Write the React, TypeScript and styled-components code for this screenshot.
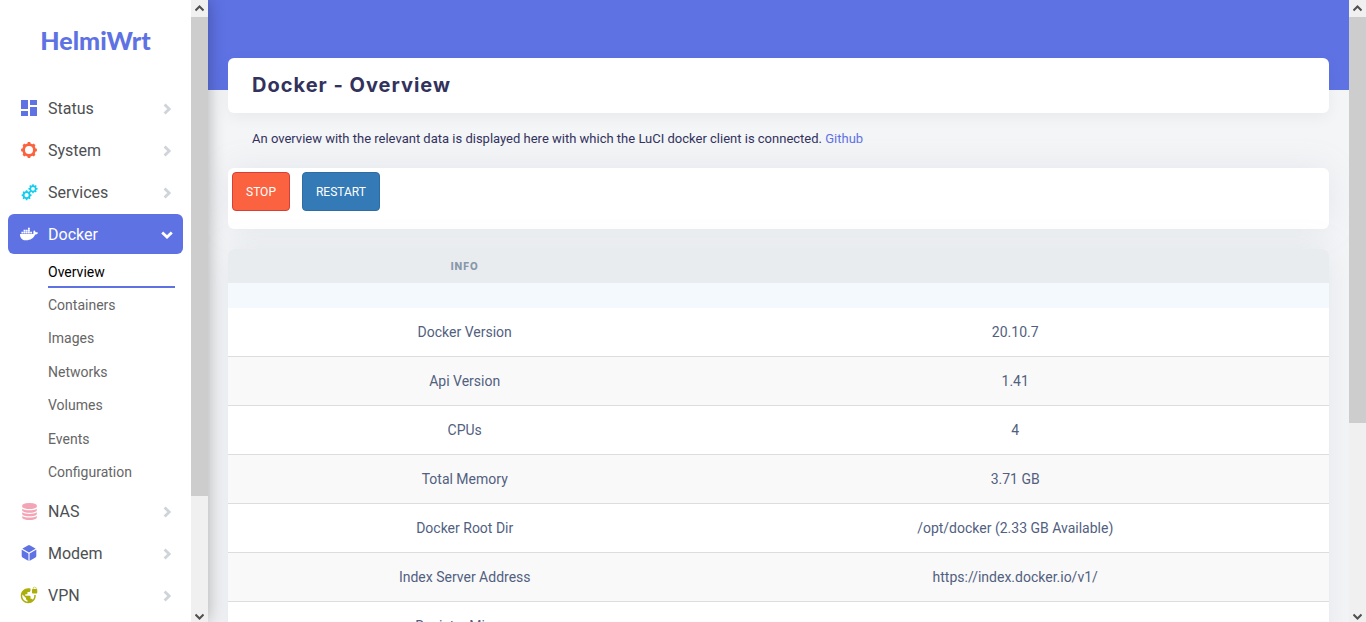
import React from 'react';
import styled, { createGlobalStyle } from 'styled-components';
import { MdVpnLock } from 'react-icons/md';
import { FaDocker } from 'react-icons/fa';
import { IoCube } from 'react-icons/io5';

const GlobalStyle = createGlobalStyle`
  * { box-sizing: border-box; }
  body {
    margin: 0;
    font-family: Roboto, "Liberation Sans", sans-serif;
    font-size: 14px;
    color: #32325d;
    background: #f4f5f7;
  }
`;

const Shell = styled.div`
  display: flex;
  height: 100vh;
  overflow: hidden;
`;

const Sidebar = styled.aside`
  display: flex;
  flex: none;
  width: 208px;
  background: #fff;
  box-shadow: 0 0 16px 0 rgba(0, 0, 0, 0.3);
  z-index: 1;
`;

const SidebarBody = styled.div`
  flex: 1;
  overflow: hidden;
  padding: 0 8px;
`;

const Brand = styled.a`
  display: flex;
  align-items: center;
  justify-content: center;
  height: 80px;
  margin-bottom: 8px;
  color: #5e72e4;
  font-family: Lato, sans-serif;
  font-size: 25px;
  font-weight: 900;
  text-decoration: none;
`;

const Menu = styled.ul`
  display: flex;
  flex-direction: column;
  gap: 2px;
  margin: 0;
  padding: 0;
  list-style: none;
`;

const MenuLink = styled.a<{ $active?: boolean }>`
  display: flex;
  align-items: center;
  height: 40px;
  padding: 0 10px 0 12px;
  border-radius: 6px;
  background: ${p => (p.$active ? '#5e72e4' : 'transparent')};
  color: ${p => (p.$active ? '#fff' : '#4d4f53')};
  font-size: 16px;
  text-decoration: none;
`;

const MenuIcon = styled.span<{ $color: string }>`
  display: flex;
  justify-content: center;
  width: 18px;
  margin-right: 10px;
  color: ${p => p.$color};
`;

const MenuLabel = styled.span`
  flex: 1;
`;

const Chevron = styled.span<{ $active?: boolean }>`
  display: flex;
  justify-content: center;
  width: 12px;
  padding-top: 2px;
  color: ${p => (p.$active ? '#fff' : '#ced4da')};
`;

const SubMenu = styled.ul`
  display: grid;
  grid-template-rows: repeat(7, 1fr);
  height: 235px;
  margin: 0 8px 0 40px;
  padding: 1px 0 0;
  list-style: none;
`;

const SubLink = styled.a<{ $active?: boolean }>`
  display: flex;
  align-items: center;
  height: 33px;
  padding-top: 2px;
  border-bottom: 2px solid ${p => (p.$active ? '#5e72e4' : 'transparent')};
  color: ${p => (p.$active ? '#000' : '#666')};
  font-size: 14px;
  text-decoration: none;
`;

const ScrollTrack = styled.div`
  display: flex;
  flex: none;
  flex-direction: column;
  width: 17px;
  background: #f0f0f0;
`;

const ScrollArrow = styled.span<{ $height: number }>`
  display: flex;
  align-items: center;
  justify-content: center;
  height: ${p => p.$height}px;
`;

const ScrollRun = styled.div`
  flex: 1;
`;

const ScrollThumb = styled.div<{ $size: number }>`
  height: ${p => p.$size}%;
  background: #cdcdcd;
`;

const Main = styled.main`
  flex: 1;
  overflow: hidden;
  padding: 58px 20px 0;
  background: linear-gradient(#5e72e4, #5e72e4) top / 100% 90px no-repeat #f4f5f7;
`;

const Card = styled.section`
  border-radius: 6px;
  background: #fff;
  box-shadow: 0 0 32px 0 rgba(136, 152, 170, 0.15);
`;

const TitleCard = styled(Card)`
  box-shadow: 0 4px 16px 0 rgba(0, 0, 0, 0.05);
`;

const Title = styled.h1`
  margin: 0;
  padding: 0 24px;
  font-family: Inter, sans-serif;
  font-size: 20px;
  font-weight: 700;
  line-height: 55px;
  letter-spacing: 1px;
`;

const Description = styled.p`
  margin: 0;
  padding: 16px 24px 20px;
  font-size: 13px;
  line-height: 19px;
`;

const TextLink = styled.a`
  color: #5e72e4;
  text-decoration: none;
`;

const ActionCard = styled(Card)`
  display: flex;
  gap: 12px;
  margin-bottom: 20px;
  padding: 4px 4px 18px;
`;

const ActionButton = styled.button<{ $fill: string; $edge: string }>`
  height: 39px;
  padding: 0 13px;
  border: 1px solid ${p => p.$edge};
  border-radius: 4px;
  background: ${p => p.$fill};
  color: #fff;
  font-family: inherit;
  font-size: 12px;
  text-transform: uppercase;
`;

const InfoTable = styled.table`
  width: 100%;
  border-collapse: separate;
  border-spacing: 0;
  table-layout: fixed;
  border-radius: 6px;
  overflow: hidden;
  background: #fff;
  box-shadow: 0 0 32px 0 rgba(136, 152, 170, 0.15);
`;

const HeadCell = styled.th<{ $width?: string }>`
  width: ${p => p.$width ?? 'auto'};
  height: 34px;
  padding: 0;
  background: #e8ecef;
  color: #8898aa;
  font-family: Inter, sans-serif;
  font-size: 10px;
  font-weight: 800;
  letter-spacing: 1px;
  text-transform: uppercase;
`;

const SpacerCell = styled.td`
  height: 25px;
  padding: 0;
  background: #f4f9fd;
`;

const InfoRow = styled.tr`
  background: #fff;
  &:nth-child(odd) { background: #f9f9f9; }
`;

const InfoCell = styled.td`
  height: 49px;
  padding: 0;
  border-bottom: 1px solid #dcdddf;
  color: #525f7f;
  text-align: center;
`;

function gearPath(cx: number, cy: number, outer: number, root: number, hole: number, teeth: number) {
  const step = (Math.PI * 2) / teeth;
  const at = (r: number, a: number) =>
    `${(cx + r * Math.sin(a)).toFixed(2)} ${(cy - r * Math.cos(a)).toFixed(2)}`;
  let d = '';
  for (let i = 0; i < teeth; i++) {
    const a = i * step;
    d += `${i ? 'L' : 'M'}${at(root, a - step * 0.3)}L${at(outer, a - step * 0.19)}L${at(outer, a + step * 0.19)}L${at(root, a + step * 0.3)}`;
  }
  return `${d}ZM${cx - hole} ${cy}a${hole} ${hole} 0 1 0 ${hole * 2} 0a${hole} ${hole} 0 1 0 ${-hole * 2} 0Z`;
}

const DashboardIcon = () => (
  <svg width="16" height="16" viewBox="0 0 16 16" fill="currentColor" aria-hidden="true">
    <path d="M0 0h7v9H0zM0 11h7v5H0zM9 0h7v5H9zM9 7h7v9H9z" />
  </svg>
);

const GearIcon = () => (
  <svg width="16" height="16" viewBox="0 0 16 16" fill="currentColor" fillRule="evenodd" aria-hidden="true">
    <path d={gearPath(8, 8, 8, 6.8, 4, 8)} />
  </svg>
);

const GearsIcon = () => (
  <svg width="17" height="17" viewBox="0 0 17 17" fill="currentColor" fillRule="evenodd" aria-hidden="true">
    <path d={gearPath(5.6, 11.2, 5, 4, 2.1, 8)} />
    <path d={gearPath(12, 4.8, 4.6, 3.6, 1.9, 8)} />
  </svg>
);

const DatabaseIcon = () => (
  <svg width="17" height="17" viewBox="-128 0 1792 1792" fill="currentColor" aria-hidden="true">
    <path d="M768 768q237 0 443-43t325-127v170q0 69-103 128t-280 93.5-385 34.5-385-34.5-280-93.5-103-128v-170q119 84 325 127t443 43zm0 768q237 0 443-43t325-127v170q0 69-103 128t-280 93.5-385 34.5-385-34.5-280-93.5-103-128v-170q119 84 325 127t443 43zm0-384q237 0 443-43t325-127v170q0 69-103 128t-280 93.5-385 34.5-385-34.5-280-93.5-103-128v-170q119 84 325 127t443 43zm0-1152q208 0 385 34.5t280 93.5 103 128v128q0 69-103 128t-280 93.5-385 34.5-385-34.5-280-93.5-103-128v-128q0-69 103-128t280-93.5 385-34.5z" />
  </svg>
);

const ChevronIcon = ({ down }: { down?: boolean }) => (
  <svg width="12" height="12" viewBox="0 0 12 12" fill="none" stroke="currentColor" strokeWidth="2.8" aria-hidden="true">
    <path d={down ? 'M1.2 3.4L6 8L10.8 3.4' : 'M3.6 1.4L8.2 6L3.6 10.6'} />
  </svg>
);

const ArrowIcon = ({ down }: { down?: boolean }) => (
  <svg width="9" height="7" viewBox="0 0 9 7" fill="none" stroke="#505050" strokeWidth="2" aria-hidden="true">
    <path d={down ? 'M0.5 1.5L4.5 5.5L8.5 1.5' : 'M0.5 5.5L4.5 1.5L8.5 5.5'} />
  </svg>
);

const Scrollbar = ({ size }: { size: number }) => (
  <ScrollTrack aria-hidden="true">
    <ScrollArrow $height={17}><ArrowIcon /></ScrollArrow>
    <ScrollRun><ScrollThumb $size={size} /></ScrollRun>
    <ScrollArrow $height={11}><ArrowIcon down /></ScrollArrow>
  </ScrollTrack>
);

type Entry = { label: string; color: string; icon: React.ReactNode; children?: string[] };

const entries: Entry[] = [
  { label: 'Status', color: '#5e72e4', icon: <DashboardIcon /> },
  { label: 'System', color: '#fb6340', icon: <GearIcon /> },
  { label: 'Services', color: '#11cdef', icon: <GearsIcon /> },
  {
    label: 'Docker',
    color: '#fff',
    icon: <FaDocker size={18} />,
    children: ['Overview', 'Containers', 'Images', 'Networks', 'Volumes', 'Events', 'Configuration'],
  },
  { label: 'NAS', color: '#f3a4b5', icon: <DatabaseIcon /> },
  { label: 'Modem', color: '#5e72e4', icon: <IoCube size={18} /> },
  { label: 'VPN', color: '#adad0b', icon: <MdVpnLock size={18} /> },
];

const info: [string, string][] = [
  ['Docker Version', '20.10.7'],
  ['Api Version', '1.41'],
  ['CPUs', '4'],
  ['Total Memory', '3.71 GB'],
  ['Docker Root Dir', '/opt/docker (2.33 GB Available)'],
  ['Index Server Address', 'https://index.docker.io/v1/'],
  ['Registry Mirrors', '-'],
];

export default function App() {
  return (
    <>
      <GlobalStyle />
      <Shell>
        <Sidebar>
          <SidebarBody>
            <Brand href="#">HelmiWrt</Brand>
            <nav>
              <Menu>
                {entries.map(({ label, color, icon, children }) => (
                  <li key={label}>
                    <MenuLink href="#" $active={!!children}>
                      <MenuIcon $color={color}>{icon}</MenuIcon>
                      <MenuLabel>{label}</MenuLabel>
                      <Chevron $active={!!children}>
                        <ChevronIcon down={!!children} />
                      </Chevron>
                    </MenuLink>
                    {children && (
                      <SubMenu>
                        {children.map((name, i) => (
                          <li key={name}>
                            <SubLink href="#" $active={i === 0}>{name}</SubLink>
                          </li>
                        ))}
                      </SubMenu>
                    )}
                  </li>
                ))}
              </Menu>
            </nav>
          </SidebarBody>
          <Scrollbar size={80.6} />
        </Sidebar>
        <Main>
          <TitleCard>
            <Title>Docker - Overview</Title>
          </TitleCard>
          <Description>
            An overview with the relevant data is displayed here with which the LuCI docker client is connected.{' '}
            <TextLink href="#">Github</TextLink>
          </Description>
          <ActionCard>
            <ActionButton type="button" $fill="#fb6340" $edge="#d43f3a">Stop</ActionButton>
            <ActionButton type="button" $fill="#337ab7" $edge="#2e6da4">Restart</ActionButton>
          </ActionCard>
          <InfoTable>
            <thead>
              <tr>
                <HeadCell $width="43%" scope="col">Info</HeadCell>
                <HeadCell />
              </tr>
            </thead>
            <tbody>
              <tr>
                <SpacerCell colSpan={2} />
              </tr>
              {info.map(([name, value]) => (
                <InfoRow key={name}>
                  <InfoCell>{name}</InfoCell>
                  <InfoCell>{value}</InfoCell>
                </InfoRow>
              ))}
            </tbody>
          </InfoTable>
        </Main>
        <Scrollbar size={68.4} />
      </Shell>
    </>
  );
}
